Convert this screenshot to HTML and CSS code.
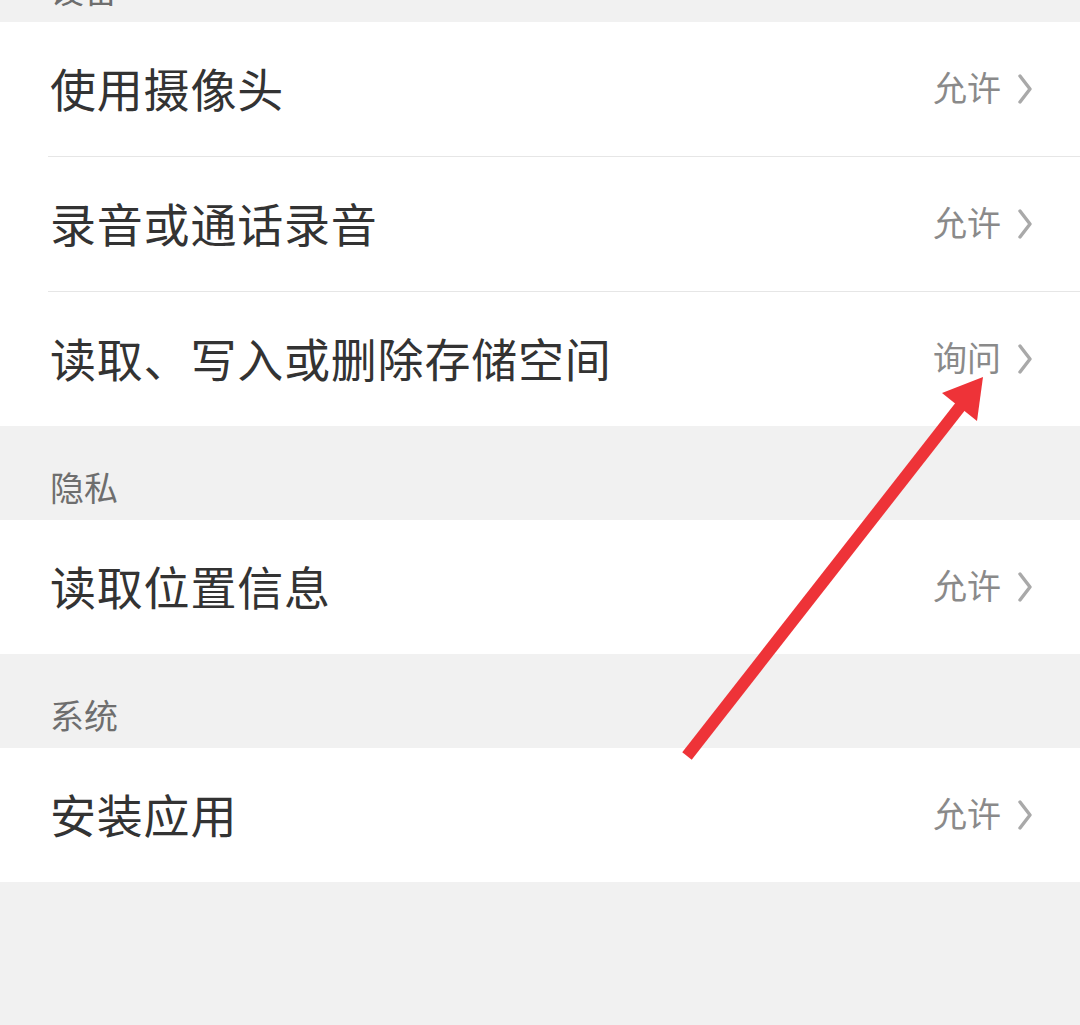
FILE: index.html
```html
<!DOCTYPE html>
<html lang="zh-CN">
<head>
<meta charset="utf-8">
<title>权限设置</title>
<link rel="stylesheet" href="styles.css">
</head>
<body>
<div class="page">
  <div class="section-title">设备</div>
  <div class="group">
    <div class="item">
      <span class="label">使用摄像头</span>
      <span class="value">允许</span>
      <svg class="chev" viewBox="0 0 14 30"><polyline points="2,2 12,15 2,28"/></svg>
    </div>
    <div class="item">
      <span class="label">录音或通话录音</span>
      <span class="value">允许</span>
      <svg class="chev" viewBox="0 0 14 30"><polyline points="2,2 12,15 2,28"/></svg>
    </div>
    <div class="item">
      <span class="label">读取、写入或删除存储空间</span>
      <span class="value">询问</span>
      <svg class="chev" viewBox="0 0 14 30"><polyline points="2,2 12,15 2,28"/></svg>
    </div>
  </div>

  <div class="section-title">隐私</div>
  <div class="group">
    <div class="item">
      <span class="label">读取位置信息</span>
      <span class="value">允许</span>
      <svg class="chev" viewBox="0 0 14 30"><polyline points="2,2 12,15 2,28"/></svg>
    </div>
  </div>

  <div class="section-title">系统</div>
  <div class="group">
    <div class="item">
      <span class="label">安装应用</span>
      <span class="value">允许</span>
      <svg class="chev" viewBox="0 0 14 30"><polyline points="2,2 12,15 2,28"/></svg>
    </div>
  </div>
</div>

<svg class="arrow" viewBox="0 0 1080 1025" width="1080" height="1025">
  <line x1="687" y1="756" x2="963" y2="403" />
  <polygon points="983,377 942,393 977,421" />
</svg>
</body>
</html>
```

FILE: styles.css
```css
html, body {
  margin: 0;
  padding: 0;
  background: #f1f1f1;
}
body {
  width: 1080px;
  height: 1025px;
  overflow: hidden;
  font-family: "Noto Sans CJK SC", "Noto Sans", sans-serif;
}
.page {
  margin-top: -72px;
  display: flex;
  flex-direction: column;
}
.section-title {
  height: 94px;
  box-sizing: border-box;
  padding: 43px 0 0 50px;
  font-size: 34px;
  line-height: 36px;
  color: #6e6e6e;
}
.group {
  background: #ffffff;
  display: flex;
  flex-direction: column;
}
.item {
  height: 134px;
  box-sizing: border-box;
  margin-left: 48px;
  padding: 0 48px 5px 2px;
  display: flex;
  align-items: center;
}
.item + .item {
  height: 135px;
  border-top: 1px solid #e6e6e6;
}
.label {
  flex: 1;
  font-size: 46px;
  color: #333333;
  letter-spacing: 0.8px;
}
.value {
  font-size: 34px;
  color: #8a8a8a;
  margin-right: 17px;
}
.chev {
  width: 14px;
  height: 30px;
  margin-top: 4px;
  fill: none;
  stroke: #a9a9a9;
  stroke-width: 3.4;
  stroke-linecap: round;
  stroke-linejoin: round;
}
.arrow {
  position: absolute;
  left: 0;
  top: 0;
  pointer-events: none;
}
.arrow line {
  stroke: #ee3338;
  stroke-width: 12;
}
.arrow polygon {
  fill: #ee3338;
}
```
